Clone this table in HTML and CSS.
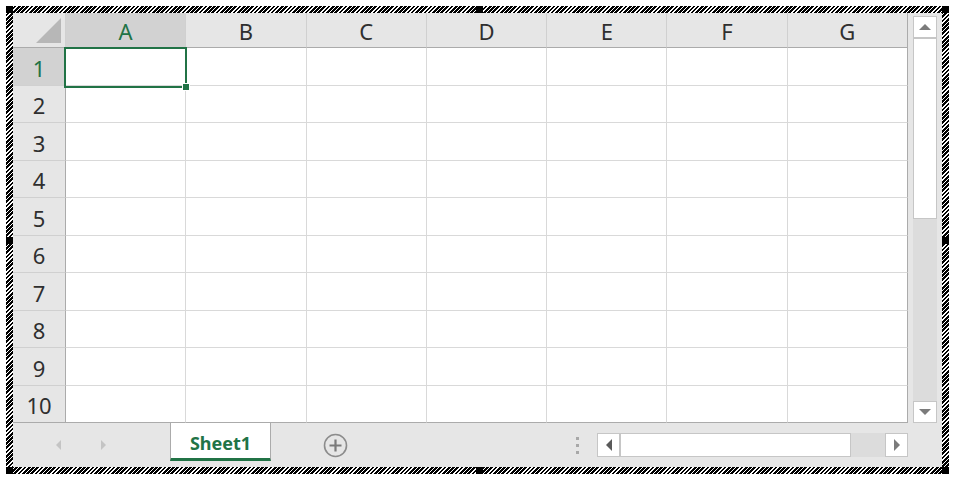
FILE: index.html
```html
<!DOCTYPE html>
<html>
<head>
<meta charset="utf-8">
<link rel="stylesheet" href="styles.css">
</head>
<body>
<div class="frame">
  <div class="sheet">
    <div class="main">
      <div class="cells">
        <div class="corner"><span class="tri"></span></div>
        <div class="ch sel">A</div><div class="ch">B</div><div class="ch">C</div><div class="ch">D</div><div class="ch">E</div><div class="ch">F</div><div class="ch last">G</div>

        <div class="rh sel">1</div><div class="c active"><span class="fill"></span></div><div class="c"></div><div class="c"></div><div class="c"></div><div class="c"></div><div class="c"></div><div class="c last"></div>
        <div class="rh">2</div><div class="c"></div><div class="c"></div><div class="c"></div><div class="c"></div><div class="c"></div><div class="c"></div><div class="c last"></div>
        <div class="rh">3</div><div class="c"></div><div class="c"></div><div class="c"></div><div class="c"></div><div class="c"></div><div class="c"></div><div class="c last"></div>
        <div class="rh">4</div><div class="c"></div><div class="c"></div><div class="c"></div><div class="c"></div><div class="c"></div><div class="c"></div><div class="c last"></div>
        <div class="rh">5</div><div class="c"></div><div class="c"></div><div class="c"></div><div class="c"></div><div class="c"></div><div class="c"></div><div class="c last"></div>
        <div class="rh">6</div><div class="c"></div><div class="c"></div><div class="c"></div><div class="c"></div><div class="c"></div><div class="c"></div><div class="c last"></div>
        <div class="rh">7</div><div class="c"></div><div class="c"></div><div class="c"></div><div class="c"></div><div class="c"></div><div class="c"></div><div class="c last"></div>
        <div class="rh">8</div><div class="c"></div><div class="c"></div><div class="c"></div><div class="c"></div><div class="c"></div><div class="c"></div><div class="c last"></div>
        <div class="rh">9</div><div class="c"></div><div class="c"></div><div class="c"></div><div class="c"></div><div class="c"></div><div class="c"></div><div class="c last"></div>
        <div class="rh bottom">10</div><div class="c bottom"></div><div class="c bottom"></div><div class="c bottom"></div><div class="c bottom"></div><div class="c bottom"></div><div class="c bottom"></div><div class="c bottom last"></div>
      </div>
      <div class="vscroll">
        <div class="sbtn vbtn"><span class="arr up"></span></div>
        <div class="vthumb"></div>
        <div class="vtrack"></div>
        <div class="sbtn vbtn"><span class="arr down"></span></div>
      </div>
    </div>
    <div class="tabbar">
      <div class="nav">
        <span class="navarr left"></span>
        <span class="navarr right"></span>
      </div>
      <div class="tab">Sheet1</div>
      <div class="addwrap">
        <div class="add">
          <svg width="25" height="25" viewBox="0 0 25 25"><circle cx="12.5" cy="12.5" r="11" fill="none" stroke="#8c8c8c" stroke-width="1.6"/><path d="M12.5 6.5v12M6.5 12.5h12" stroke="#7a7a7a" stroke-width="2.2"/></svg>
        </div>
      </div>
      <div class="dots"><i></i><i></i><i></i></div>
      <div class="hscroll">
        <div class="sbtn hbtn"><span class="arr left"></span></div>
        <div class="hthumb"></div>
        <div class="htrack"></div>
        <div class="sbtn hbtn"><span class="arr right"></span></div>
      </div>
    </div>
  </div>
  <span class="handle h-tl"></span><span class="handle h-tm"></span><span class="handle h-tr"></span>
  <span class="handle h-ml"></span><span class="handle h-mr"></span>
  <span class="handle h-bl"></span><span class="handle h-bm"></span><span class="handle h-br"></span>
</div>
</body>
</html>
```

FILE: styles.css
```css
html, body {
  margin: 0;
  padding: 0;
  background: #ffffff;
}
body {
  font-family: "Noto Sans", "Open Sans", sans-serif;
}
.frame {
  position: relative;
  margin: 6px 0 0 6px;
  width: 943px;
  height: 468px;
  padding: 7px;
  box-sizing: border-box;
  background: repeating-linear-gradient(-45deg, #000 0 1.9px, #fff 1.9px 3px);
}
.sheet {
  width: 929px;
  height: 454px;
  background: #e6e6e6;
  display: flex;
  flex-direction: column;
}
.main {
  display: flex;
  height: 410px;
}
.cells {
  width: 895px;
  display: grid;
  grid-template-columns: 53px repeat(7, 1fr);
  grid-template-rows: 35px repeat(10, 37.5px);
  background: #fff;
}
.corner {
  background: #e6e6e6;
  border-right: 1px solid #d0d0d0;
  border-bottom: 1px solid #ababab;
  position: relative;
}
.tri {
  position: absolute;
  right: 4px;
  bottom: 4px;
  width: 0;
  height: 0;
  border-left: 25px solid transparent;
  border-bottom: 25px solid #b7b7b7;
}
.ch {
  background: #e6e6e6;
  border-right: 1px solid #d0d0d0;
  border-bottom: 1px solid #ababab;
  display: flex;
  align-items: center;
  justify-content: center;
  font-size: 22px;
  color: #2f2f2f;
  padding-top: 1px;
}
.ch.last {
  border-right: 1px solid #ababab;
}
.ch.sel, .rh.sel {
  background: #d2d2d2;
  color: #217346;
}
.rh {
  background: #e6e6e6;
  border-right: 1px solid #ababab;
  border-bottom: 1px solid #d0d0d0;
  display: flex;
  align-items: center;
  justify-content: center;
  font-size: 22px;
  color: #2f2f2f;
  padding-top: 3px;
}
.c {
  border-right: 1px solid #d9d9d9;
  border-bottom: 1px solid #d9d9d9;
}
.c.last {
  border-right: 1px solid #ababab;
}
.c.bottom, .rh.bottom {
  border-bottom: 1px solid #ababab;
}
.active {
  position: relative;
}
.active::before {
  content: "";
  position: absolute;
  left: -2px;
  top: -1px;
  right: -2px;
  bottom: -3px;
  border: 2px solid #217346;
}
.fill {
  position: absolute;
  right: -5px;
  bottom: -6px;
  width: 6px;
  height: 6px;
  background: #217346;
  border: 1px solid #fff;
  z-index: 2;
}
.vscroll {
  width: 34px;
  display: flex;
  flex-direction: column;
  padding: 3px 0 0 5px;
  box-sizing: border-box;
  align-items: flex-start;
}
.sbtn {
  background: #fff;
  border: 1px solid #c6c6c6;
  box-sizing: border-box;
  display: flex;
  align-items: center;
  justify-content: center;
}
.vbtn {
  width: 24px;
  height: 22px;
}
.vthumb {
  width: 24px;
  height: 181px;
  background: #fff;
  border: 1px solid #c6c6c6;
  box-sizing: border-box;
}
.vtrack {
  width: 24px;
  height: 182px;
  background: #dcdcdc;
}
.arr {
  width: 0;
  height: 0;
}
.arr.up {
  border-left: 6px solid transparent;
  border-right: 6px solid transparent;
  border-bottom: 6px solid #7b7b7b;
}
.arr.down {
  border-left: 6px solid transparent;
  border-right: 6px solid transparent;
  border-top: 6px solid #7b7b7b;
}
.arr.left {
  border-top: 6px solid transparent;
  border-bottom: 6px solid transparent;
  border-right: 6px solid #5a5a5a;
}
.arr.right {
  border-top: 6px solid transparent;
  border-bottom: 6px solid transparent;
  border-left: 6px solid #7b7b7b;
}
.tabbar {
  height: 44px;
  display: flex;
  align-items: flex-start;
}
.nav {
  width: 157px;
  height: 43px;
  display: flex;
  align-items: center;
  padding-left: 43px;
  box-sizing: border-box;
  gap: 40px;
}
.navarr {
  width: 0;
  height: 0;
  border-top: 5px solid transparent;
  border-bottom: 5px solid transparent;
}
.navarr.left {
  border-right: 5px solid #c4c4c4;
}
.navarr.right {
  border-left: 5px solid #c4c4c4;
}
.tab {
  width: 101px;
  height: 38px;
  box-sizing: border-box;
  background: #fff;
  border-left: 1px solid #ababab;
  border-right: 1px solid #ababab;
  border-bottom: 3px solid #217346;
  display: flex;
  align-items: center;
  justify-content: center;
  font-weight: bold;
  font-size: 18px;
  color: #217346;
  padding-top: 5px;
}
.addwrap {
  width: 300px;
  height: 44px;
  display: flex;
  align-items: center;
  padding-left: 52px;
  box-sizing: border-box;
}
.add {
  width: 25px;
  height: 25px;
  display: flex;
  margin-top: 0;
}
.dots {
  width: 13px;
  height: 44px;
  display: flex;
  flex-direction: column;
  align-items: center;
  justify-content: center;
  gap: 4px;
}
.dots i {
  display: block;
  width: 3px;
  height: 3px;
  background: #a8a8a8;
}
.hscroll {
  margin-left: 13px;
  margin-top: 10px;
  display: flex;
  height: 24px;
}
.hbtn {
  width: 23px;
  height: 24px;
}
.hthumb {
  width: 231px;
  height: 24px;
  background: #fff;
  border: 1px solid #c6c6c6;
  box-sizing: border-box;
}
.htrack {
  width: 34px;
  height: 24px;
  background: #dcdcdc;
}
.handle {
  position: absolute;
  width: 7px;
  height: 7px;
  background: #000;
}
.h-tl { left: 0; top: 0; }
.h-tm { left: 470px; top: 0; }
.h-tr { right: 0; top: 0; }
.h-ml { left: 0; top: 231px; }
.h-mr { right: 0; top: 231px; }
.h-bl { left: 0; bottom: 0; }
.h-bm { left: 470px; bottom: 0; }
.h-br { right: 0; bottom: 0; }
```
